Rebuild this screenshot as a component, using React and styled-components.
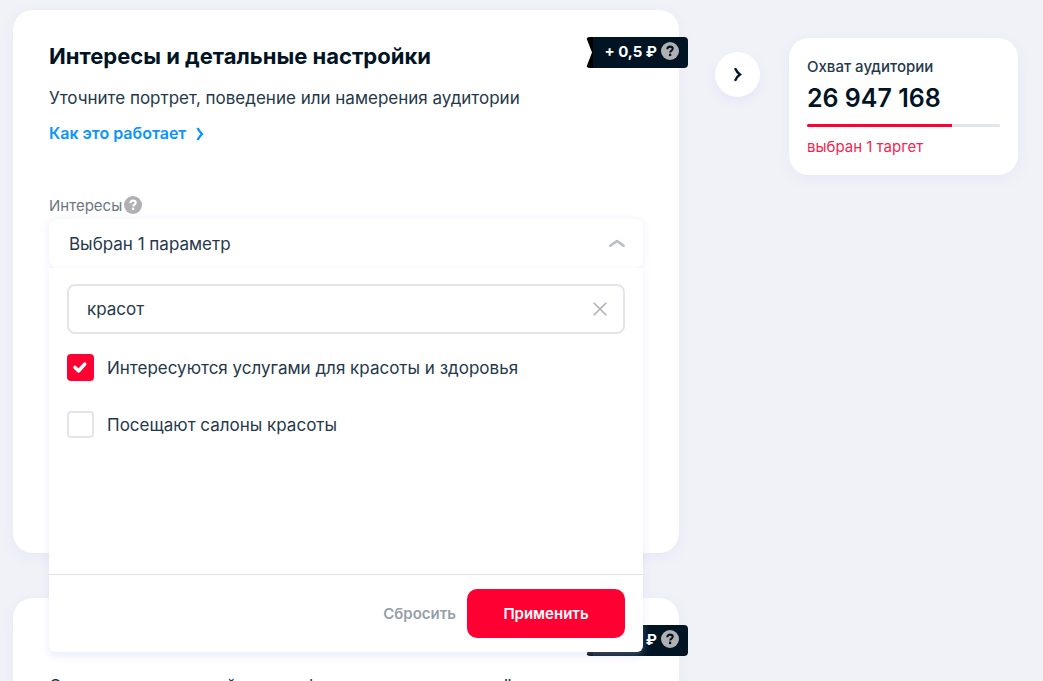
import { useState } from "react";
import styled, { createGlobalStyle, css } from "styled-components";

const GlobalStyle = createGlobalStyle`
    * {
        box-sizing: border-box;
    }
    body {
        margin: 0;
        background: #f1f2f7;
        color: #001424;
        font-family: Inter, Roboto, sans-serif;
    }
    h2, p {
        margin: 0;
    }
    button, input {
        font-family: inherit;
    }
`;

const Page = styled.div`
    display: flex;
    align-items: flex-start;
    gap: 36px;
    height: 100vh;
    overflow: hidden;
    padding: 10px 25px 0 13px;
`;

const Main = styled.main`
    flex: 1;
    display: grid;
    gap: 45px;
`;

const Card = styled.section`
    position: relative;
    min-height: 543px;
    padding: 33px 36px;
    border-radius: 20px;
    background: #fff;
    box-shadow: 0 4px 14px rgba(190, 195, 255, 0.2);
`;

const Title = styled.h2`
    font-size: 22px;
    line-height: 26px;
    font-weight: 700;
`;

const Text = styled.p`
    margin-top: 17px;
    font-size: 17px;
    line-height: 24px;
    color: #25384a;
`;

const HelpLink = styled.a`
    display: inline-flex;
    align-items: center;
    gap: 10px;
    margin-top: 12px;
    font-size: 16px;
    line-height: 22px;
    font-weight: 600;
    color: #0a94ff;
    text-decoration: none;
`;

const PriceTag = styled.div`
    position: absolute;
    top: 27px;
    right: -9px;
    display: flex;
    align-items: center;
    justify-content: flex-end;
    gap: 4px;
    width: 102px;
    height: 31px;
    padding: 0 9px 3px 0;
    border-radius: 4px;
    background: linear-gradient(90deg, #000 7px, #001424 7px);
    clip-path: polygon(0 0, 100% 0, 100% 100%, 0 100%, 6px 50%);
    color: #fff;
    font-size: 15px;
    font-weight: 700;
`;

const HelpButton = styled.button`
    display: flex;
    padding: 0;
    border: 0;
    background: none;
    color: ${(props) => (props.$dark ? "#001424" : "#fff")};
`;

const Field = styled.div`
    position: relative;
    margin-top: 50px;
`;

const FieldLabel = styled.div`
    display: flex;
    align-items: center;
    gap: 2px;
    height: 22px;
    margin-bottom: 3px;
    font-size: 15px;
    color: #6c7681;
`;

const SelectButton = styled.button`
    display: flex;
    align-items: center;
    justify-content: space-between;
    width: 100%;
    height: 49px;
    padding: 0 18px 0 20px;
    border: 0;
    border-radius: 8px;
    background: #fff;
    box-shadow: 0 1px 8px rgba(190, 195, 255, 0.3);
    font-size: 17px;
    color: #25384a;
`;

const Menu = styled.div`
    position: absolute;
    top: 100%;
    left: 0;
    right: 0;
    z-index: 2;
    border-radius: 0 0 6px 6px;
    background: #fff;
    box-shadow: 0 4px 8px rgba(190, 195, 255, 0.3);
`;

const MenuBody = styled.div`
    height: 306px;
    padding: 16px 18px;
`;

const SearchBox = styled.div`
    display: flex;
    align-items: center;
    height: 50px;
    padding: 0 16px 0 18px;
    border: 2px solid #e2e5eb;
    border-radius: 8px;
`;

const SearchInput = styled.input`
    flex: 1;
    min-width: 0;
    padding: 0;
    border: 0;
    outline: 0;
    background: none;
    font-size: 17px;
    color: #25384a;
`;

const ClearButton = styled.button`
    display: flex;
    padding: 0;
    border: 0;
    background: none;
`;

const Options = styled.div`
    display: grid;
    gap: 30px;
    margin-top: 20px;
`;

const Option = styled.label`
    display: flex;
    align-items: center;
    gap: 13px;
    height: 27px;
    font-size: 17px;
    color: #25384a;
`;

const checkIcon = `url("data:image/svg+xml,%3Csvg xmlns='http://www.w3.org/2000/svg' viewBox='0 0 27 27'%3E%3Cpath d='M8 13.5l3.7 3.3 6-6.7' fill='none' stroke='white' stroke-width='3.6' stroke-linecap='round' stroke-linejoin='round'/%3E%3C/svg%3E")`;

const Checkbox = styled.input`
    appearance: none;
    width: 27px;
    height: 27px;
    margin: 0;
    border: 2px solid #e2e5eb;
    border-radius: 4px;
    background: #fff;
    ${(props) => props.checked && css`
        border: 0;
        background: #ff0032 ${checkIcon} center / 27px no-repeat;
    `}
`;

const MenuFooter = styled.div`
    display: flex;
    align-items: center;
    justify-content: flex-end;
    gap: 11px;
    height: 78px;
    padding: 0 18px;
    border-top: 1px solid #e4e4f0;
`;

const Button = styled.button`
    padding: 0;
    border: 0;
    background: none;
    font-size: 15px;
    font-weight: 600;
    color: #969fa8;
    ${(props) => props.$primary && css`
        width: 158px;
        height: 49px;
        border-radius: 10px;
        background: #ff0032;
        color: #fff;
    `}
`;

const Side = styled.aside`
    display: flex;
    align-items: flex-start;
    gap: 29px;
    padding-top: 28px;
`;

const RoundButton = styled.button`
    display: flex;
    align-items: center;
    justify-content: center;
    width: 45px;
    height: 45px;
    margin-top: 14px;
    padding: 0;
    border: 0;
    border-radius: 50%;
    background: #fff;
    box-shadow: 0 4px 10px rgba(190, 195, 255, 0.25);
`;

const Reach = styled.div`
    width: 229px;
    padding: 19px 18px 18px;
    border-radius: 20px;
    background: #fff;
    box-shadow: 0 4px 14px rgba(190, 195, 255, 0.2);
`;

const ReachLabel = styled.p`
    font-size: 15px;
    line-height: 20px;
    font-weight: 500;
    color: #25384a;
`;

const ReachValue = styled.p`
    margin-top: 5px;
    font-size: 25px;
    line-height: 32px;
    font-weight: 600;
`;

const Track = styled.div`
    height: 3px;
    margin: 10px 0;
    border-radius: 2px;
    background: #e2e5eb;
`;

const Bar = styled.div`
    height: 100%;
    border-radius: 2px 0 0 2px;
    background: #ff0032;
`;

const Target = styled.p`
    font-size: 15px;
    line-height: 20px;
    color: #f0264e;
`;

function Help({ dark }) {
    return (
        <HelpButton type="button" aria-label="Подсказка" $dark={dark}>
            <svg width="18" height="18" viewBox="0 0 18 18" fill="none">
                <circle cx="9" cy="9" r="9" fill="#b0b0b3" />
                <path d="M6.3 7.200C6.3 5.4 7.4 4.6 9 4.600s2.700.8 2.700 2.200c0 1.800-2.500 1.700-2.500 3.600" stroke="currentColor" strokeWidth="2.100" />
                <circle cx="9.1" cy="12.900" r="1.300" fill="currentColor" />
            </svg>
        </HelpButton>
    );
}

function Price() {
    return (
        <PriceTag>
            <span>+ 0,5 ₽</span>
            <Help dark />
        </PriceTag>
    );
}

const reach = 75;

export default function App() {
    const [query, setQuery] = useState("красот");
    const [options, setOptions] = useState([
        { name: "Интересуются услугами для красоты и здоровья", checked: true },
        { name: "Посещают салоны красоты", checked: false },
    ]);

    const toggle = (name) => {
        setOptions(options.map((o) => (o.name === name ? { ...o, checked: !o.checked } : o)));
    };

    const reset = () => setOptions(options.map((o) => ({ ...o, checked: false })));

    return (
        <>
            <GlobalStyle />
            <Page>
                <Main>
                    <Card>
                        <Title>Интересы и детальные настройки</Title>
                        <Text>Уточните портрет, поведение или намерения аудитории</Text>
                        <HelpLink href="#help">
                            Как это работает
                            <svg width="8" height="16" viewBox="0 0 8 16" fill="none" stroke="currentColor" strokeWidth="2.4">
                                <path d="M1.500 3Q3.500 6.500 6 9Q3.500 11.500 1.500 15" />
                            </svg>
                        </HelpLink>
                        <Price />
                        <Field>
                            <FieldLabel>
                                <span id="interests">Интересы</span>
                                <Help />
                            </FieldLabel>
                            <SelectButton type="button" aria-expanded="true" aria-describedby="interests">
                                Выбран 1 параметр
                                <svg width="18" height="12" viewBox="0 0 18 12" fill="none">
                                    <path d="M3.300 7.700L10 3l6.500 4.700" stroke="#b8bcc6" strokeWidth="2.6" strokeLinecap="round" strokeLinejoin="round" />
                                </svg>
                            </SelectButton>
                            <Menu>
                                <MenuBody>
                                    <SearchBox>
                                        <SearchInput
                                            aria-label="Поиск интересов"
                                            value={query}
                                            onChange={(e) => setQuery(e.target.value)}
                                        />
                                        <ClearButton type="button" aria-label="Очистить" onClick={() => setQuery("")}>
                                            <svg width="14" height="14" viewBox="0 0 14 14" stroke="#b0b0b0" strokeWidth="1.6">
                                                <path d="M.7.7l12.600 12.600M13.300.7L.7 13.300" />
                                            </svg>
                                        </ClearButton>
                                    </SearchBox>
                                    <Options>
                                        {options.map((o) => (
                                            <Option key={o.name}>
                                                <Checkbox type="checkbox" checked={o.checked} onChange={() => toggle(o.name)} />
                                                {o.name}
                                            </Option>
                                        ))}
                                    </Options>
                                </MenuBody>
                                <MenuFooter>
                                    <Button type="button" onClick={reset}>Сбросить</Button>
                                    <Button type="button" $primary>Применить</Button>
                                </MenuFooter>
                            </Menu>
                        </Field>
                    </Card>
                    <Card>
                        <Title>Основные места</Title>
                        <Text>Охватите посетителей около офиса и тех, кто там живёт</Text>
                        <Price />
                    </Card>
                </Main>
                <Side>
                    <RoundButton type="button" aria-label="Свернуть">
                        <svg width="8" height="14" viewBox="0 0 8 14" fill="none" stroke="#001424" strokeWidth="2.4" strokeLinecap="round">
                            <path d="M1.500 1Q3 4.500 6 6.500Q3 8.500 1.500 12" />
                        </svg>
                    </RoundButton>
                    <Reach>
                        <ReachLabel>Охват аудитории</ReachLabel>
                        <ReachValue>26 947 168</ReachValue>
                        <Track>
                            <Bar style={{ width: `${reach}%` }} />
                        </Track>
                        <Target>выбран 1 таргет</Target>
                    </Reach>
                </Side>
            </Page>
        </>
    );
}
